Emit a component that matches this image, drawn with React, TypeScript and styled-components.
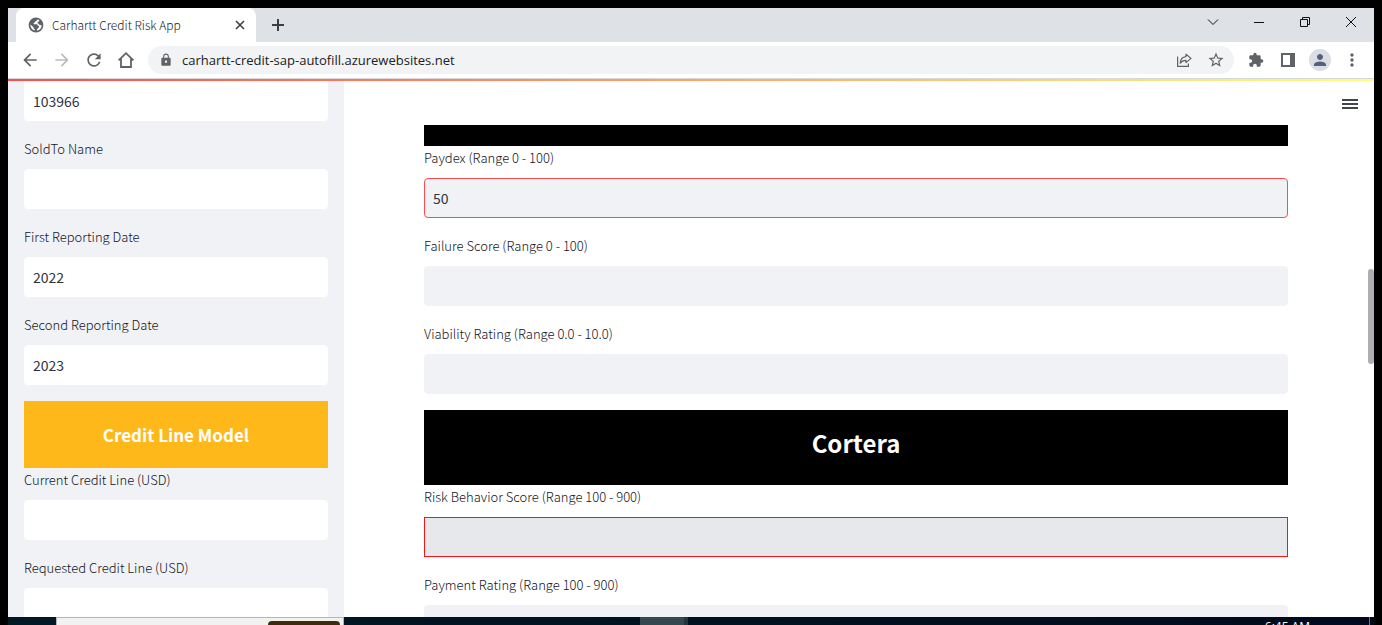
import React, { useId } from "react";
import styled, { createGlobalStyle, css } from "styled-components";
import {
  MdArrowBack,
  MdArrowForward,
  MdRefresh,
  MdLock,
  MdStarBorder,
  MdExtension,
  MdPerson,
  MdMoreVert,
} from "react-icons/md";

const chromeFont = `"Open Sans", "Noto Sans", sans-serif`;
const pageFont = `"Noto Sans CJK SC", "Noto Sans", sans-serif`;

const GlobalStyle = createGlobalStyle`
  *, *::before, *::after { box-sizing: border-box; }
  body { margin: 0; background: #000; overflow: hidden; }
  button { border: 0; padding: 0; background: none; font: inherit; color: inherit; }
`;

const Screen = styled.div`
  display: flex;
  flex-direction: column;
  height: 100vh;
  padding: 8px 8px 0;
  background: #000;
  font-family: ${chromeFont};
`;

const TabStrip = styled.div`
  display: flex;
  flex: none;
  height: 34px;
  padding-left: 8px;
  background: #dee1e6;
`;

const Tab = styled.div`
  display: flex;
  align-items: center;
  gap: 8px;
  width: 240px;
  padding: 0 10px 0 12px;
  border-radius: 8px 8px 0 0;
  background: #fff;
  color: #202327;
  font-size: 12px;
`;

const TabTitle = styled.span`
  flex: 1;
  font-family: ${pageFont};
  font-weight: 300;
  line-height: 16px;
  white-space: nowrap;
`;

const IconButton = styled.button<{ $width?: number; $dim?: boolean }>`
  display: flex;
  flex: none;
  align-items: center;
  justify-content: center;
  width: ${(p) => p.$width ?? 32}px;
  height: 32px;
  color: ${(p) => (p.$dim ? "#babcbe" : "#5f6368")};
`;

const TabClose = styled(IconButton)`
  color: #3c4043;
`;

const NewTab = styled(IconButton)`
  align-self: center;
  margin-left: 6px;
  color: #3c4043;
`;

const WindowControls = styled.div`
  display: flex;
  margin-left: auto;
`;

const WindowButton = styled(IconButton)`
  height: 28px;
  color: #111;
`;

const Toolbar = styled.div`
  display: flex;
  flex: none;
  align-items: center;
  height: 37px;
  padding: 0 6px;
  border-bottom: 1px solid #d5d8dc;
  background: #fff;
`;

const AddressBar = styled.div`
  display: flex;
  flex: 1;
  align-items: center;
  height: 28px;
  margin: 0 6px;
  padding: 0 2px 0 11px;
  border-radius: 14px;
  background: #f1f3f4;
  color: #5f6368;
`;

const Address = styled.input`
  flex: 1;
  min-width: 0;
  margin-left: 9px;
  padding: 0;
  border: 0;
  outline: 0;
  background: none;
  color: #202124;
  font: 13px/20px ${chromeFont};
`;

const Avatar = styled.span`
  display: flex;
  align-items: center;
  justify-content: center;
  width: 22px;
  height: 22px;
  border-radius: 50%;
  background: #dadde3;
  color: #55607a;
`;

const Decoration = styled.div`
  flex: none;
  height: 2px;
  background: linear-gradient(90deg, #ff4b4b, #fffd80);
`;

const Page = styled.div`
  display: flex;
  flex: 1;
  min-height: 0;
  background: #fff;
  font-family: ${pageFont};
  color: #31333f;
`;

const Sidebar = styled.aside`
  flex: none;
  width: 336px;
  padding: 0 16px;
  overflow: hidden;
  background: #f0f2f6;
`;

const Main = styled.main`
  position: relative;
  flex: 1;
  min-width: 0;
  padding: 0 86px 0 80px;
  overflow: hidden;
`;

const PageHeader = styled.header`
  display: flex;
  align-items: center;
  justify-content: flex-end;
  height: 44px;
  margin-right: -70px;
  padding-top: 2px;
`;

const Stack = styled.div`
  display: flex;
  flex-direction: column;
  gap: 16px;
`;

const Section = styled.section`
  display: flex;
  flex-direction: column;
`;

const Banner = styled.h2<{ $size: "small" | "large" }>`
  margin: 0;
  color: #fff;
  font-weight: 700;
  text-align: center;
  ${(p) =>
    p.$size === "small"
      ? css`
          height: 67px;
          background: #ffb81a;
          font-size: 17px;
          line-height: 67px;
        `
      : css`
          height: 75px;
          background: #000;
          font-size: 24px;
          line-height: 66px;
        `}
`;

const BannerEnd = styled.div`
  height: 21px;
  background: #000;
`;

const FieldBox = styled.div`
  display: flex;
  flex-direction: column;
`;

const FieldLabel = styled.label`
  height: 32px;
  color: #12141f;
  font-size: 13px;
  font-weight: 300;
  line-height: 24px;
  white-space: nowrap;
`;

type Tone = "side" | "main" | "focused" | "marked";

const toneStyles = {
  side: css`
    background: #fff;
    border-color: #fff;
  `,
  main: css`
    background: #f0f2f6;
    border-color: #f0f2f6;
  `,
  focused: css`
    background: #f0f2f6;
    border-color: #ff4b4b;
  `,
  marked: css`
    background: #e7e8ec;
    border-color: #fa1414;
    border-radius: 0;
  `,
};

const TextInput = styled.input<{ $tone: Tone; $cut?: boolean }>`
  width: 100%;
  height: 40px;
  padding: 0 8px;
  border: 1px solid;
  border-radius: ${(p) => (p.$cut ? "0 0 4px 4px" : "4px")};
  outline: 0;
  color: #31333f;
  font: 14px/24px ${pageFont};
  ${(p) => toneStyles[p.$tone]}
`;

const ScrollThumb = styled.div`
  position: absolute;
  top: 188px;
  right: 0;
  width: 6px;
  height: 95px;
  border-radius: 3px;
  background: #adadb2;
`;

const Taskbar = styled.div`
  display: flex;
  flex: none;
  height: 8px;
  padding-left: 48px;
  overflow: hidden;
  background: linear-gradient(90deg, #001a24, #000a1c);
`;

const SearchBox = styled.div`
  display: flex;
  flex: none;
  justify-content: flex-end;
  width: 288px;
  padding: 3px 3px 0 0;
  border: 1px solid #b5b5b5;
  border-bottom: 0;
  background: #f2f2f1;
`;

const SearchHighlight = styled.div`
  width: 72px;
  border-radius: 6px 6px 0 0;
  background: #3d2b0b;
`;

const ActiveApp = styled.div`
  width: 48px;
  margin-left: 296px;
  border-right: 4px solid #25343b;
  background: #344850;
`;

const Clock = styled.time`
  margin-left: auto;
  padding-top: 2px;
  color: #fff;
  font-size: 12px;
  line-height: 16px;
`;

const ShowDesktop = styled.div`
  width: 5px;
  margin-left: 59px;
  border-left: 1px solid #6a7680;
`;

function GlobeIcon() {
  return (
    <svg width="16" height="16" viewBox="0 0 16 16" aria-hidden="true">
      <circle cx="8" cy="8" r="7.4" fill="#5f6368" />
      <path
        d="M9.800 2.300C9.500 3.700 8.300 3.300 7.600 4.100 7.200 4.600 7.300 5.400 6.500 5.600 5.600 5.800 5.400 6.700 6 7.200H8.800C9.800 7.300 9.400 8.600 10.300 8.800 11.500 9 11.200 10 10.600 10.600 9.800 11.400 9 11.800 8.900 13.600 11.600 13.300 13.700 11 13.700 8.200L12 8C10.800 7.800 11.100 6.600 10 6.400 9.200 6.200 9.400 5.100 10.200 4.900 11 4.700 11.200 3.900 11.300 3.100ZM2.300 7.600C2.200 10.600 4 12.900 6.700 13.600V12C5.600 11.800 5.600 11 5.300 10.300 4.900 9.300 3.500 8.800 2.300 7.600Z"
        fill="#fff"
      />
    </svg>
  );
}

function HomeIcon() {
  return (
    <svg width="18" height="18" viewBox="0 0 18 18" fill="none" stroke="#5f6368" strokeWidth="1.800" aria-hidden="true">
      <path d="M1.600 9.300 9 2.200 16.400 9.300M4 7.400V16H14V7.400" />
    </svg>
  );
}

function ShareIcon() {
  return (
    <svg width="16" height="16" viewBox="0 0 16 16" fill="none" stroke="#5f6368" strokeWidth="1.200" aria-hidden="true">
      <path d="M1.600 4.500V14.400H12.400V11.600" />
      <path d="M10 2.200 15 6.400 10 10.600V8.300C7.500 8.300 5.500 9 4.200 11.200 4.400 7.500 6.500 4.900 10 4.600Z" strokeLinejoin="round" />
    </svg>
  );
}

function SidePanelIcon() {
  return (
    <svg width="14" height="14" viewBox="0 0 14 14" aria-hidden="true">
      <path d="M0 0H14V14H0ZM2 2V12H9V2Z" fill="#5f6368" fillRule="evenodd" />
    </svg>
  );
}

function StrokeIcon({ d, size, width = 1 }: { d: string; size: number; width?: number }) {
  return (
    <svg width={size} height={size} viewBox={`0 0 ${size} ${size}`} fill="none" stroke="currentColor" strokeWidth={width} aria-hidden="true">
      <path d={d} />
    </svg>
  );
}

function MenuIcon() {
  return (
    <svg width="16" height="12" viewBox="0 0 16 12" aria-hidden="true">
      <path d="M0 1H16V3H0ZM0 5H16V7H0ZM0 9H16V11H0Z" fill="#41434e" />
    </svg>
  );
}

function Field({ label, value = "", tone }: { label: string; value?: string; tone: Tone }) {
  const id = useId();
  return (
    <FieldBox>
      <FieldLabel htmlFor={id}>{label}</FieldLabel>
      <TextInput id={id} $tone={tone} defaultValue={value} />
    </FieldBox>
  );
}

export default function App() {
  return (
    <Screen>
      <GlobalStyle />
      <TabStrip>
        <Tab>
          <GlobeIcon />
          <TabTitle>Carhartt Credit Risk App</TabTitle>
          <TabClose $width={12} aria-label="Close tab">
            <StrokeIcon size={12} width={1.6} d="M2 2 10 10M10 2 2 10" />
          </TabClose>
        </Tab>
        <NewTab aria-label="New tab">
          <StrokeIcon size={14} width={2} d="M7 1V13M1 7H13" />
        </NewTab>
        <WindowControls>
          <WindowButton $width={46} aria-label="Search tabs">
            <StrokeIcon size={12} d="M1 3.500 6 8.500 11 3.500" />
          </WindowButton>
          <WindowButton $width={46} aria-label="Minimize">
            <StrokeIcon size={12} d="M1 6.500H11" />
          </WindowButton>
          <WindowButton $width={46} aria-label="Restore">
            <StrokeIcon size={12} d="M1.500 3.500H8.500V10.500H1.500ZM3.500 3.500V1.500H10.500V8.500H8.500" />
          </WindowButton>
          <WindowButton $width={46} aria-label="Close window">
            <StrokeIcon size={12} d="M1 1 11 11M11 1 1 11" />
          </WindowButton>
        </WindowControls>
      </TabStrip>
      <Toolbar>
        <IconButton aria-label="Back"><MdArrowBack size={20} /></IconButton>
        <IconButton aria-label="Forward" $dim><MdArrowForward size={20} /></IconButton>
        <IconButton aria-label="Reload"><MdRefresh size={20} /></IconButton>
        <IconButton aria-label="Home"><HomeIcon /></IconButton>
        <AddressBar>
          <MdLock size={14} />
          <Address aria-label="Address" defaultValue="carhartt-credit-sap-autofill.azurewebsites.net" />
          <IconButton aria-label="Share"><ShareIcon /></IconButton>
          <IconButton aria-label="Bookmark"><MdStarBorder size={18} /></IconButton>
        </AddressBar>
        <IconButton aria-label="Extensions"><MdExtension size={16} /></IconButton>
        <IconButton aria-label="Side panel"><SidePanelIcon /></IconButton>
        <IconButton aria-label="Profile">
          <Avatar><MdPerson size={18} /></Avatar>
        </IconButton>
        <IconButton aria-label="Menu"><MdMoreVert size={20} /></IconButton>
      </Toolbar>
      <Decoration />
      <Page>
        <Sidebar>
          <Stack>
            <TextInput $tone="side" $cut aria-label="SoldTo Number" defaultValue="103966" />
            <Field tone="side" label="SoldTo Name" />
            <Field tone="side" label="First Reporting Date" value="2022" />
            <Field tone="side" label="Second Reporting Date" value="2023" />
            <Section>
              <Banner $size="small">Credit Line Model</Banner>
              <Field tone="side" label="Current Credit Line (USD)" />
            </Section>
            <Field tone="side" label="Requested Credit Line (USD)" />
          </Stack>
        </Sidebar>
        <Main>
          <PageHeader>
            <IconButton $width={16} aria-label="App menu"><MenuIcon /></IconButton>
          </PageHeader>
          <Stack>
            <Section>
              <BannerEnd />
              <Field tone="focused" label="Paydex (Range 0 - 100)" value="50" />
            </Section>
            <Field tone="main" label="Failure Score (Range 0 - 100)" />
            <Field tone="main" label="Viability Rating (Range 0.0 - 10.0)" />
            <Section>
              <Banner $size="large">Cortera</Banner>
              <Field tone="marked" label="Risk Behavior Score (Range 100 - 900)" />
            </Section>
            <Field tone="main" label="Payment Rating (Range 100 - 900)" />
          </Stack>
          <ScrollThumb />
        </Main>
      </Page>
      <Taskbar>
        <SearchBox><SearchHighlight /></SearchBox>
        <ActiveApp />
        <Clock>6:45 AM</Clock>
        <ShowDesktop />
      </Taskbar>
    </Screen>
  );
}
